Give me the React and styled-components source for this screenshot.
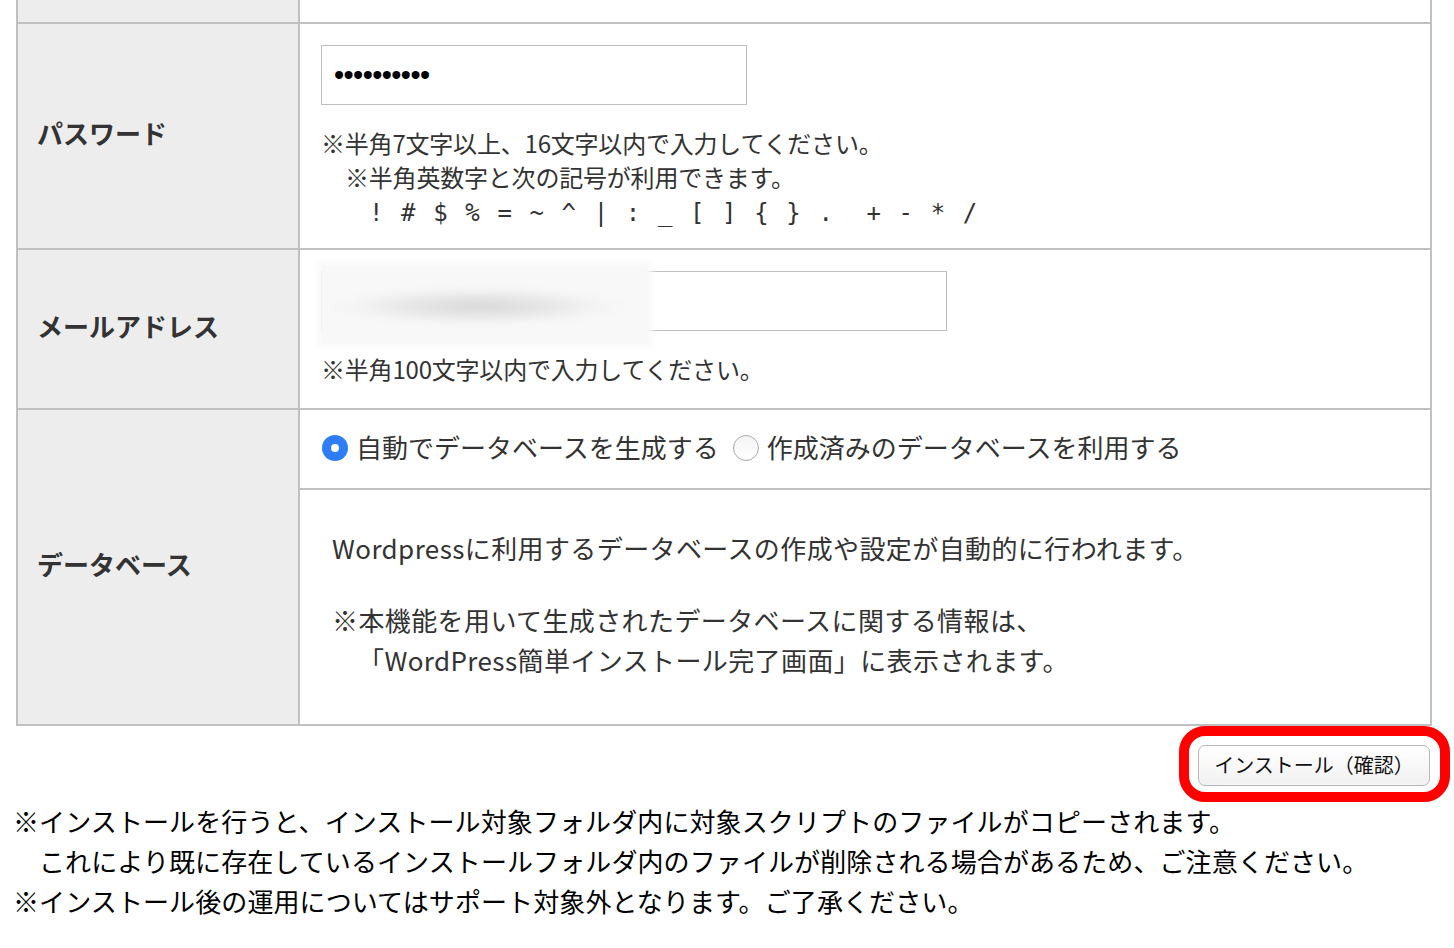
import styled, { createGlobalStyle } from "styled-components";

const GlobalStyle = createGlobalStyle`
body {
  margin: 0;
  background: #fff;
  font-family: "Noto Sans CJK JP", "Noto Sans", sans-serif;
}
`;

const Page = styled.div`
  padding: 0 22px 0 16px;
  width: 1454px;
  box-sizing: border-box;
`;

const Table = styled.div`
  display: flex;
  flex-direction: column;
  border: 2px solid #c0c0c0;
  border-top: none;
`;

const Row = styled.div`
  display: flex;
  height: ${(p) => p.h}px;
  border-top: ${(p) => (p.first ? "none" : "2px solid #c0c0c0")};
`;

const Label = styled.div`
  width: 282px;
  flex-shrink: 0;
  background: #ededed;
  border-right: 2px solid #c0c0c0;
  display: flex;
  align-items: center;
  padding-left: 19px;
  box-sizing: border-box;
  font-size: 26px;
  font-weight: 700;
  color: #333;
  padding-bottom: 8px;
`;

const Cell = styled.div`
  flex: 1;
  padding: 21px 0 0 21px;
  color: #333;
`;

const SplitCell = styled.div`
  flex: 1;
  display: flex;
  flex-direction: column;
  color: #333;
`;

const TextInput = styled.input`
  display: block;
  width: ${(p) => p.w}px;
  height: 60px;
  box-sizing: border-box;
  border: 1px solid #c0c0c0;
  background: #fff;
  padding: 0 12px;
  outline: none;
  font-family: "Liberation Sans", sans-serif;
  font-size: 29px;
  letter-spacing: -0.6px;
  color: #000;
`;

const InputWrap = styled.div`
  position: relative;
  width: ${(p) => p.w}px;
`;

const Blur = styled.div`
  position: absolute;
  left: -3px;
  top: -9px;
  width: 334px;
  height: 85px;
  background: radial-gradient(ellipse 46% 24% at 48% 52%, #d8d8d8 0%, #e6e6e6 45%, #f4f4f4 80%, #f8f8f8 100%);
  filter: blur(3px);
`;

const Note = styled.div`
  margin-top: 21px;
  font-size: 24px;
  line-height: 34px;
  letter-spacing: -0.2px;
`;

const NoteIndent = styled.div`
  padding-left: 24px;
`;

const Symbols = styled.div`
  padding-left: 48px;
  font-family: "DejaVu Sans Mono", monospace;
  font-size: 24px;
  line-height: 38px;
  letter-spacing: 1.6px;
  white-space: pre;
`;

const RadioRow = styled.div`
  height: 80px;
  display: flex;
  align-items: center;
  padding: 0 0 6px 22px;
  box-sizing: border-box;
  border-bottom: 2px solid #c0c0c0;
  font-size: 26px;
  letter-spacing: 0;
`;

const RadioOption = styled.label`
  display: flex;
  align-items: center;
  gap: 8px;
  margin-right: 14px;
`;

const RadioDot = styled.span`
  width: 26px;
  height: 26px;
  border-radius: 50%;
  box-sizing: border-box;
  display: flex;
  align-items: center;
  justify-content: center;
  margin-top: 4px;
  background: ${(p) => (p.on ? "#2f7df6" : "linear-gradient(#f4f4f4, #ffffff)")};
  border: ${(p) => (p.on ? "none" : "1px solid #a9a9a9")};
  &::after {
    content: "";
    width: 8px;
    height: 8px;
    border-radius: 50%;
    background: #fff;
    display: ${(p) => (p.on ? "block" : "none")};
  }
`;

const Desc = styled.div`
  padding: 38px 0 0 32px;
  font-size: 26px;
  line-height: 40px;
  letter-spacing: 0.4px;
`;

const DescBlock = styled.p`
  margin: 0 0 32px;
`;

const Indent = styled.span`
  display: block;
  padding-left: ${(p) => p.n * 26}px;
`;

const ButtonBar = styled.div`
  display: flex;
  justify-content: flex-end;
  margin-right: -18px;
  height: 75px;
`;

const Highlight = styled.div`
  border: 10px solid #f00;
  border-radius: 26px;
  padding: 9px 10px 5px 9px;
  height: 76px;
  box-sizing: border-box;
  width: 271px;
`;

const Button = styled.button`
  width: 232px;
  height: 41px;
  border: 1px solid #b8b8b8;
  border-radius: 7px;
  background: linear-gradient(#ffffff, #f1f1f1);
  font-family: "Noto Sans CJK JP", sans-serif;
  font-size: 20px;
  color: #111;
  padding: 0 0 2px;
  letter-spacing: 0px;
`;

const Footer = styled.div`
  margin-left: -3px;
  font-size: 26px;
  line-height: 40px;
  color: #000;
  letter-spacing: 0.1px;
`;

const symbols = "! # $ % = ~ ^ | : _ [ ] { } .  + - * /";

export default function App() {
  return (
    <Page>
      <GlobalStyle />
      <Table>
        <Row h={22} first>
          <Label />
          <Cell />
        </Row>
        <Row h={224}>
          <Label>パスワード</Label>
          <Cell>
            <TextInput type="password" w={426} readOnly value="abcdefghij" />
            <Note>
              ※半角7文字以上、16文字以内で入力してください。
              <NoteIndent>※半角英数字と次の記号が利用できます。</NoteIndent>
              <Symbols>{symbols}</Symbols>
            </Note>
          </Cell>
        </Row>
        <Row h={158}>
          <Label>メールアドレス</Label>
          <Cell>
            <InputWrap w={626}>
              <TextInput type="text" w={626} readOnly value="" />
              <Blur />
            </InputWrap>
            <Note>※半角100文字以内で入力してください。</Note>
          </Cell>
        </Row>
        <Row h={314}>
          <Label>データベース</Label>
          <SplitCell>
            <RadioRow>
              <RadioOption>
                <RadioDot on />
                自動でデータベースを生成する
              </RadioOption>
              <RadioOption>
                <RadioDot />
                作成済みのデータベースを利用する
              </RadioOption>
            </RadioRow>
            <Desc>
              <DescBlock>Wordpressに利用するデータベースの作成や設定が自動的に行われます。</DescBlock>
              <DescBlock>
                ※本機能を用いて生成されたデータベースに関する情報は、
                <Indent n={1}>「WordPress簡単インストール完了画面」に表示されます。</Indent>
              </DescBlock>
            </Desc>
          </SplitCell>
        </Row>
      </Table>
      <ButtonBar>
        <Highlight>
          <Button>インストール（確認）</Button>
        </Highlight>
      </ButtonBar>
      <Footer>
        ※インストールを行うと、インストール対象フォルダ内に対象スクリプトのファイルがコピーされます。
        <Indent n={1}>これにより既に存在しているインストールフォルダ内のファイルが削除される場合があるため、ご注意ください。</Indent>
        ※インストール後の運用についてはサポート対象外となります。ご了承ください。
      </Footer>
    </Page>
  );
}
